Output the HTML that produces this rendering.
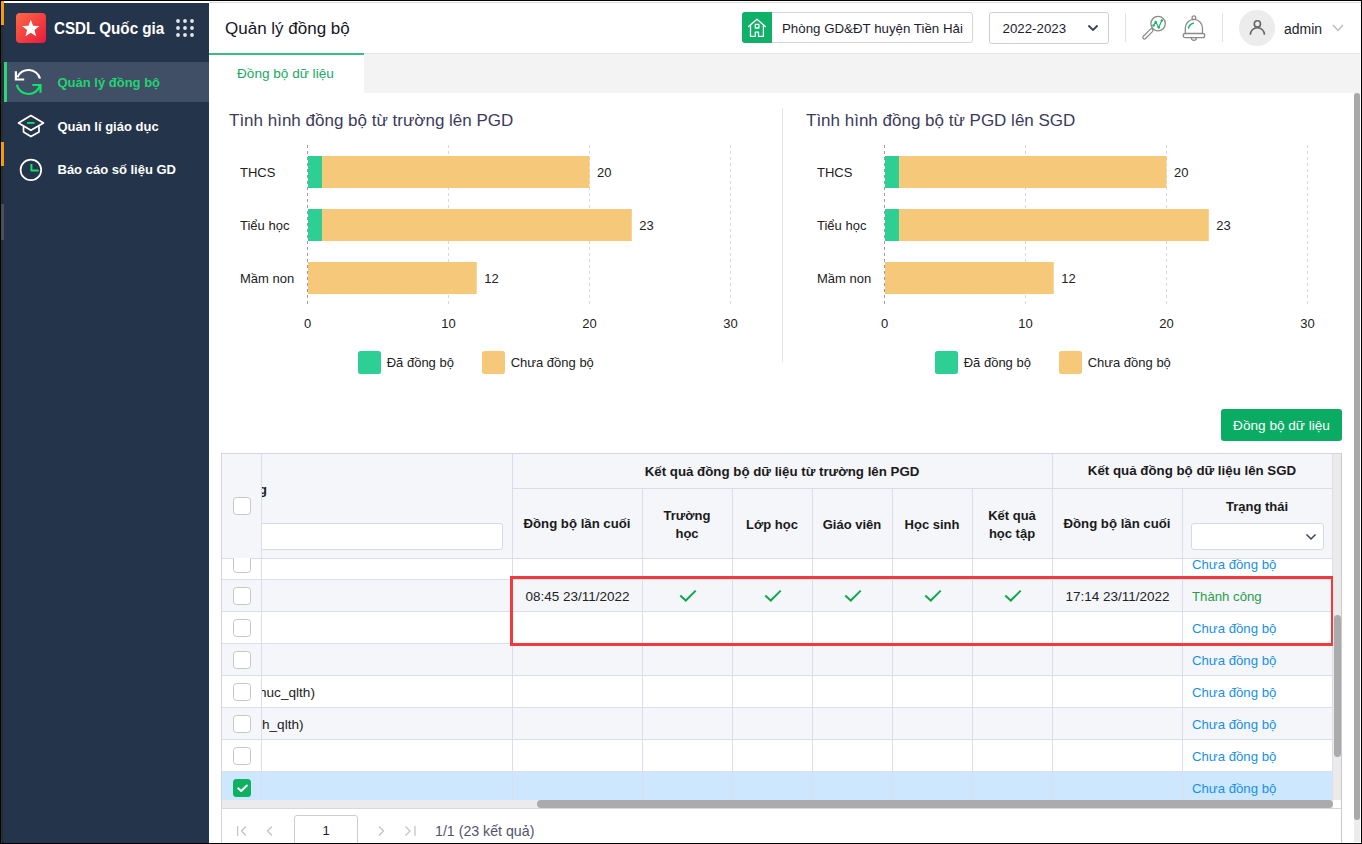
<!DOCTYPE html>
<html><head><meta charset="utf-8">
<style>
*{box-sizing:border-box;margin:0;padding:0}
html,body{width:1362px;height:844px;overflow:hidden;background:#fff}
body{position:relative;font-family:"Liberation Sans",sans-serif;color:#222}
.a{position:absolute}
.t{position:absolute;white-space:nowrap;line-height:1}
/* frame */
#fr-top{left:0;top:0;width:1362px;height:1px;background:#000}
#fr-bot{left:0;top:843px;width:1362px;height:1px;background:#000}
#fr-left{left:0;top:0;width:1px;height:844px;background:#000}
#fr-right{left:1361px;top:0;width:1px;height:844px;background:#000}
/* sidebar */
#side{left:1px;top:1px;width:208px;height:842px;background:#24344b}
#side-edge{left:1px;top:1px;width:3px;height:842px;background:linear-gradient(to right,#2b3134 0,#2b3134 1px,#262c33 1px,#262c33 2px,#22353e 2px)}
#sb-white{left:4px;top:1px;width:1357px;height:1px;background:#fff}
.logo{left:16px;top:13px;width:30px;height:30px;border-radius:4px;background:linear-gradient(135deg,#ff6a45,#e8193c)}
.menu-act{left:4px;top:62px;width:205px;height:40px;background:#404f65}
.menu-bar{left:4px;top:62px;width:3px;height:40px;background:#2ed47a}
.mi{font-weight:bold;font-size:13px;color:#fff}
</style></head>
<body>
<div class="a" id="side"></div>
<div class="a" id="side-edge"></div>
<div class="a" style="left:1px;top:1px;width:3px;height:24px;background:#f0a000"></div>
<div class="a" style="left:1px;top:142px;width:3px;height:24px;background:#f0a000"></div>
<div class="a" style="left:1px;top:204px;width:3px;height:36px;background:#4a4f55"></div>
<div class="a" id="sb-white"></div>
<div class="a" style="left:4px;top:2px;width:205px;height:1px;background:#fff"></div>
<div class="a" style="left:209px;top:2px;width:1152px;height:1px;background:#dddddd"></div>

<div class="a logo">
  <svg width="30" height="30" viewBox="0 0 30 30"><polygon points="14.80,6.80 17.09,12.74 23.45,13.09 18.51,17.11 20.15,23.26 14.80,19.80 9.45,23.26 11.09,17.11 6.15,13.09 12.51,12.74" fill="#fff"/></svg>
</div>
<div class="t" style="left:54px;top:20.9px;font-size:16.6px;color:#fff;font-weight:bold;transform:scaleX(0.915);transform-origin:0 0">CSDL Quốc gia</div>
<svg class="a" style="left:175px;top:18px" width="20" height="20" viewBox="0 0 20 20" fill="#e6e6ea">
 <circle cx="3" cy="3" r="1.9"/><circle cx="10" cy="3" r="1.9"/><circle cx="17" cy="3" r="1.9"/>
 <circle cx="3" cy="10" r="1.9"/><circle cx="10" cy="10" r="1.9"/><circle cx="17" cy="10" r="1.9"/>
 <circle cx="3" cy="17" r="1.9"/><circle cx="10" cy="17" r="1.9"/><circle cx="17" cy="17" r="1.9"/>
</svg>

<div class="a menu-act"></div>
<div class="a menu-bar"></div>

<svg class="a" style="left:0;top:0" width="60" height="200" viewBox="0 0 60 200" fill="none" stroke-width="2.2">
 <path d="M17.45 77.3 A12 12 0 0 1 39.98 78.5" stroke="#fff"/>
 <path d="M15.9 71.3 V79.5 H24.2" stroke="#fff"/>
 <path d="M16.81 84.7 A12 12 0 0 0 40.09 85.1" stroke="#14e06c"/>
 <path d="M32.3 85 H40.5 V92.8" stroke="#14e06c"/>
 <g stroke-width="1.7" stroke-linejoin="round">
 <path d="M30.9 115.5 L43.5 122.9 L30.9 130.3 L18.5 122.9 Z" stroke="#fff"/>
 <path d="M23.5 126.3 V132.1 L30.9 136.6 L39 132.1 V126.3" stroke="#fff"/>
 <path d="M27.1 122.9 H34.5" stroke="#14e06c" stroke-width="1.9"/>
 <circle cx="30.9" cy="169.9" r="10.3" stroke="#fff"/>
 <path d="M31.4 164 V170.4 H38.6" stroke="#14e06c" stroke-width="2"/>
 </g>
</svg>
<div class="t mi" style="left:57.5px;top:76px;color:#22d372">Quản lý đồng bộ</div>
<div class="t mi" style="left:57.5px;top:119.6px">Quản lí giáo dục</div>
<div class="t mi" style="left:57.5px;top:163.3px">Báo cáo số liệu GD</div>


<!-- header -->
<div class="t" style="left:225px;top:19.6px;font-size:17px;color:#161628">Quản lý đồng bộ</div>
<div class="a" style="left:742px;top:12px;width:231px;height:31px;border:1px solid #d6d6d6;border-radius:3px;background:#fff"></div>
<div class="a" style="left:742px;top:12px;width:30px;height:31px;background:#10b068;border-radius:3px 0 0 3px"></div>
<svg class="a" style="left:742px;top:12px" width="30" height="31" viewBox="0 0 30 31" fill="none" stroke="#fff" stroke-width="1.3" stroke-linejoin="round" stroke-linecap="round">
 <path d="M6.6 14.6 L15 7.3 L23.4 14.6"/>
 <path d="M8.5 12.8 V24.4 H13.3 V20.2 H16.5 V24.4 H21.4 V12.8"/>
 <rect x="13.3" y="12.4" width="3.6" height="3.6"/>
</svg>
<div class="t" style="left:782px;top:22px;font-size:13.3px;color:#1d1d2d">Phòng GD&amp;ĐT huyện Tiền Hải</div>
<div class="a" style="left:989px;top:12px;width:120px;height:32px;border:1px solid #cfcfcf;border-radius:3px"></div>
<div class="t" style="left:1002.5px;top:22.3px;font-size:13.3px;color:#1d1d2d">2022-2023</div>
<svg class="a" style="left:1086px;top:23px" width="14" height="10" viewBox="0 0 14 10" fill="none" stroke="#3d3d5a" stroke-width="1.8"><path d="M2.4 2.5 L7 7 L11.6 2.5"/></svg>
<div class="a" style="left:1125px;top:13px;width:1px;height:29px;background:#e2e2e2"></div>
<svg class="a" style="left:1140px;top:13px" width="30" height="30" viewBox="0 0 30 30" fill="none">
 <circle cx="18.1" cy="10.6" r="7.2" stroke="#8a8a8a" stroke-width="1.3"/>
 <rect x="-1.6" y="0" width="3.2" height="13" rx="1.6" transform="translate(12.5,16.3) rotate(45)" stroke="#8a8a8a" stroke-width="1.2"/>
 <path d="M13.5 12.5 L15.7 9 L18.7 14.5 L21.8 7.5" stroke="#17b56c" stroke-width="1.2" stroke-linejoin="round"/>
 <circle cx="13.5" cy="12.5" r="1.25" fill="#17b56c"/><circle cx="15.7" cy="9" r="1.25" fill="#17b56c"/><circle cx="18.7" cy="14.5" r="1.25" fill="#17b56c"/><circle cx="21.8" cy="7.5" r="1.25" fill="#17b56c"/>
</svg>
<svg class="a" style="left:1180px;top:13px" width="28" height="30" viewBox="0 0 28 30" fill="none" stroke="#8a8a8a" stroke-width="1.3">
 <circle cx="13.9" cy="4.7" r="1.9"/>
 <path d="M5.3 20.5 V15 a8.6 8.6 0 0 1 17.2 0 V20.5"/>
 <rect x="3.2" y="20.5" width="21.5" height="4.2" rx="2"/>
 <path d="M11.4 24.8 a2.5 2.5 0 0 0 5 0"/>
 <path d="M8.5 15 a6.5 6.5 0 0 1 4.9 -4.7" stroke="#17b56c" stroke-width="1.4" stroke-linecap="round"/>
</svg>
<div class="a" style="left:1222px;top:13px;width:1px;height:29px;background:#e2e2e2"></div>
<div class="a" style="left:1239px;top:10px;width:35.5px;height:35.5px;border-radius:50%;background:#ececec"></div>
<svg class="a" style="left:1239px;top:10px" width="36" height="36" viewBox="0 0 36 36" fill="none" stroke="#676767" stroke-width="1.6">
 <circle cx="18.4" cy="13.9" r="3.1"/>
 <path d="M11.3 24.8 a7.1 7.1 0 0 1 14.2 0"/>
</svg>
<div class="t" style="left:1284px;top:21.8px;font-size:14px;color:#1d1d2d">admin</div>
<svg class="a" style="left:1331px;top:22px" width="14" height="12" viewBox="0 0 14 12" fill="none" stroke="#bdbdbd" stroke-width="1.5"><path d="M2 3 L7 8.5 L12 3"/></svg>

<!-- tab bar -->
<div class="a" style="left:209px;top:53px;width:1151px;height:40px;background:#f3f3f3;border-top:1px solid #e4e4e4"></div>
<div class="a" style="left:209px;top:53px;width:155px;height:40px;background:#fff;border-top:2px solid #3fb984"></div>
<div class="t" style="left:237px;top:67.4px;font-size:13.6px;color:#1aa862">Đồng bộ dữ liệu</div>

<svg class="a" style="left:0;top:0" width="1362" height="844" font-family="Liberation Sans">
<text x="229" y="125.8" font-size="17" fill="#3b3b5c" font-weight="normal" text-anchor="start" >Tình hình đồng bộ từ trường lên PGD</text>
<line x1="307.5" y1="145" x2="307.5" y2="304" stroke="#9a9a9a" stroke-width="1" stroke-dasharray="3,3"/>
<line x1="448.5" y1="145" x2="448.5" y2="304" stroke="#d9d9d9" stroke-width="1" stroke-dasharray="3,3"/>
<line x1="589.5" y1="145" x2="589.5" y2="304" stroke="#d9d9d9" stroke-width="1" stroke-dasharray="3,3"/>
<line x1="730.5" y1="145" x2="730.5" y2="304" stroke="#d9d9d9" stroke-width="1" stroke-dasharray="3,3"/>
<text x="240" y="177" font-size="13" fill="#222" font-weight="normal" text-anchor="start" >THCS</text>
<rect x="308.0" y="156" width="14.1" height="32" fill="#2ecf95"/>
<rect x="322.1" y="156" width="267.4" height="32" fill="#f6c879"/>
<text x="597.0" y="177" font-size="13" fill="#222" font-weight="normal" text-anchor="start" >20</text>
<text x="240" y="230" font-size="13" fill="#222" font-weight="normal" text-anchor="start" >Tiểu học</text>
<rect x="308.0" y="209" width="14.1" height="32" fill="#2ecf95"/>
<rect x="322.1" y="209" width="309.7" height="32" fill="#f6c879"/>
<text x="639.3" y="230" font-size="13" fill="#222" font-weight="normal" text-anchor="start" >23</text>
<text x="240" y="283" font-size="13" fill="#222" font-weight="normal" text-anchor="start" >Mầm non</text>
<rect x="308.0" y="262" width="168.7" height="32" fill="#f6c879"/>
<text x="484.2" y="283" font-size="13" fill="#222" font-weight="normal" text-anchor="start" >12</text>
<text x="307.5" y="328" font-size="13" fill="#222" font-weight="normal" text-anchor="middle" >0</text>
<text x="448.5" y="328" font-size="13" fill="#222" font-weight="normal" text-anchor="middle" >10</text>
<text x="589.5" y="328" font-size="13" fill="#222" font-weight="normal" text-anchor="middle" >20</text>
<text x="730.5" y="328" font-size="13" fill="#222" font-weight="normal" text-anchor="middle" >30</text>
<rect x="358" y="351" width="23" height="23" rx="2.5" fill="#2ecf95"/>
<text x="386.7" y="366.6" font-size="13" fill="#222" font-weight="normal" text-anchor="start" >Đã đồng bộ</text>
<rect x="482" y="351" width="23" height="23" rx="2.5" fill="#f6c879"/>
<text x="510.7" y="366.6" font-size="13" fill="#222" font-weight="normal" text-anchor="start" >Chưa đồng bộ</text>
<line x1="782.5" y1="108" x2="782.5" y2="362" stroke="#e6e6e6" stroke-width="1"/>
<text x="806" y="125.8" font-size="17" fill="#3b3b5c" font-weight="normal" text-anchor="start" >Tình hình đồng bộ từ PGD lên SGD</text>
<line x1="884.5" y1="145" x2="884.5" y2="304" stroke="#9a9a9a" stroke-width="1" stroke-dasharray="3,3"/>
<line x1="1025.5" y1="145" x2="1025.5" y2="304" stroke="#d9d9d9" stroke-width="1" stroke-dasharray="3,3"/>
<line x1="1166.5" y1="145" x2="1166.5" y2="304" stroke="#d9d9d9" stroke-width="1" stroke-dasharray="3,3"/>
<line x1="1307.5" y1="145" x2="1307.5" y2="304" stroke="#d9d9d9" stroke-width="1" stroke-dasharray="3,3"/>
<text x="817" y="177" font-size="13" fill="#222" font-weight="normal" text-anchor="start" >THCS</text>
<rect x="885.0" y="156" width="14.1" height="32" fill="#2ecf95"/>
<rect x="899.1" y="156" width="267.4" height="32" fill="#f6c879"/>
<text x="1174.0" y="177" font-size="13" fill="#222" font-weight="normal" text-anchor="start" >20</text>
<text x="817" y="230" font-size="13" fill="#222" font-weight="normal" text-anchor="start" >Tiểu học</text>
<rect x="885.0" y="209" width="14.1" height="32" fill="#2ecf95"/>
<rect x="899.1" y="209" width="309.7" height="32" fill="#f6c879"/>
<text x="1216.3" y="230" font-size="13" fill="#222" font-weight="normal" text-anchor="start" >23</text>
<text x="817" y="283" font-size="13" fill="#222" font-weight="normal" text-anchor="start" >Mầm non</text>
<rect x="885.0" y="262" width="168.7" height="32" fill="#f6c879"/>
<text x="1061.2" y="283" font-size="13" fill="#222" font-weight="normal" text-anchor="start" >12</text>
<text x="884.5" y="328" font-size="13" fill="#222" font-weight="normal" text-anchor="middle" >0</text>
<text x="1025.5" y="328" font-size="13" fill="#222" font-weight="normal" text-anchor="middle" >10</text>
<text x="1166.5" y="328" font-size="13" fill="#222" font-weight="normal" text-anchor="middle" >20</text>
<text x="1307.5" y="328" font-size="13" fill="#222" font-weight="normal" text-anchor="middle" >30</text>
<rect x="935" y="351" width="23" height="23" rx="2.5" fill="#2ecf95"/>
<text x="963.7" y="366.6" font-size="13" fill="#222" font-weight="normal" text-anchor="start" >Đã đồng bộ</text>
<rect x="1059" y="351" width="23" height="23" rx="2.5" fill="#f6c879"/>
<text x="1087.7" y="366.6" font-size="13" fill="#222" font-weight="normal" text-anchor="start" >Chưa đồng bộ</text>
</svg>
<div class="a" style="left:221px;top:453px;width:1120px;height:105px;background:#f4f6fa"></div>
<div class="a" style="left:221px;top:558px;width:1112px;height:242px;overflow:hidden">
<div class="a" style="left:0;top:-10px;width:1112px;height:32px;background:#fff;border-bottom:1px solid #dcdcec"></div>
<div class="a" style="left:0;top:22px;width:1112px;height:32px;background:#f4f6fa;border-bottom:1px solid #dcdcec"></div>
<div class="a" style="left:0;top:54px;width:1112px;height:32px;background:#fff;border-bottom:1px solid #dcdcec"></div>
<div class="a" style="left:0;top:86px;width:1112px;height:32px;background:#f4f6fa;border-bottom:1px solid #dcdcec"></div>
<div class="a" style="left:0;top:118px;width:1112px;height:32px;background:#fff;border-bottom:1px solid #dcdcec"></div>
<div class="a" style="left:0;top:150px;width:1112px;height:32px;background:#f4f6fa;border-bottom:1px solid #dcdcec"></div>
<div class="a" style="left:0;top:182px;width:1112px;height:32px;background:#fff;border-bottom:1px solid #dcdcec"></div>
<div class="a" style="left:0;top:214px;width:1112px;height:32px;background:#cce7fe;border-bottom:1px solid #dcdcec"></div>
<div class="a" style="left:40px;top:0;width:1px;height:242px;background:#dcdcec"></div>
<div class="a" style="left:291px;top:0;width:1px;height:242px;background:#dcdcec"></div>
<div class="a" style="left:421px;top:0;width:1px;height:242px;background:#dcdcec"></div>
<div class="a" style="left:511px;top:0;width:1px;height:242px;background:#dcdcec"></div>
<div class="a" style="left:591px;top:0;width:1px;height:242px;background:#dcdcec"></div>
<div class="a" style="left:671px;top:0;width:1px;height:242px;background:#dcdcec"></div>
<div class="a" style="left:751px;top:0;width:1px;height:242px;background:#dcdcec"></div>
<div class="a" style="left:831px;top:0;width:1px;height:242px;background:#dcdcec"></div>
<div class="a" style="left:961px;top:0;width:1px;height:242px;background:#dcdcec"></div>
<div class="a" style="left:1111px;top:0;width:1px;height:242px;background:#dcdcec"></div>
</div>
<div class="a" style="left:221px;top:453px;width:1120px;height:1px;background:#d3d4e0"></div>
<div class="a" style="left:221px;top:453px;width:1px;height:390px;background:#d3d4e0"></div>
<div class="a" style="left:512px;top:488px;width:820px;height:1px;background:#dcdcec"></div>
<div class="a" style="left:221px;top:558px;width:1112px;height:1px;background:#dcdcec"></div>
<div class="a" style="left:261px;top:454px;width:1px;height:104px;background:#dcdcec"></div>
<div class="a" style="left:512px;top:454px;width:1px;height:104px;background:#dcdcec"></div>
<div class="a" style="left:1052px;top:454px;width:1px;height:104px;background:#dcdcec"></div>
<div class="a" style="left:1332px;top:454px;width:1px;height:104px;background:#dcdcec"></div>
<div class="a" style="left:642px;top:488px;width:1px;height:70px;background:#dcdcec"></div>
<div class="a" style="left:732px;top:488px;width:1px;height:70px;background:#dcdcec"></div>
<div class="a" style="left:812px;top:488px;width:1px;height:70px;background:#dcdcec"></div>
<div class="a" style="left:892px;top:488px;width:1px;height:70px;background:#dcdcec"></div>
<div class="a" style="left:972px;top:488px;width:1px;height:70px;background:#dcdcec"></div>
<div class="a" style="left:1182px;top:488px;width:1px;height:70px;background:#dcdcec"></div>
<div class="a" style="left:262px;top:454px;width:250px;height:104px;overflow:hidden">
<div class="t" style="left:-42px;top:28.6px;font-size:13px;font-weight:bold;color:#1a1a1a">Trường</div>
<div class="a" style="left:-10px;top:69px;width:251px;height:27px;border:1px solid #d8d9e6;border-radius:3px;background:#fff"></div>
</div>
<div class="t" style="left:632px;width:300px;text-align:center;top:464.5px;font-size:13.3px;font-weight:bold;color:#1a1a1a">Kết quả đồng bộ dữ liệu từ trường lên PGD</div>
<div class="t" style="left:1042px;width:300px;text-align:center;top:464.3px;font-size:13.3px;font-weight:bold;color:#1a1a1a">Kết quả đồng bộ dữ liệu lên SGD</div>
<div class="t" style="left:427px;width:300px;text-align:center;top:517.3px;font-size:13.2px;font-weight:bold;color:#1a1a1a">Đồng bộ lần cuối</div>
<div class="t" style="left:537px;width:300px;text-align:center;top:509.2px;font-size:13px;font-weight:bold;color:#1a1a1a">Trường</div>
<div class="t" style="left:537px;width:300px;text-align:center;top:527.3px;font-size:13px;font-weight:bold;color:#1a1a1a">học</div>
<div class="t" style="left:622px;width:300px;text-align:center;top:517.5px;font-size:13px;font-weight:bold;color:#1a1a1a">Lớp học</div>
<div class="t" style="left:702px;width:300px;text-align:center;top:517.5px;font-size:13px;font-weight:bold;color:#1a1a1a">Giáo viên</div>
<div class="t" style="left:782px;width:300px;text-align:center;top:517.5px;font-size:13px;font-weight:bold;color:#1a1a1a">Học sinh</div>
<div class="t" style="left:862px;width:300px;text-align:center;top:509.2px;font-size:13px;font-weight:bold;color:#1a1a1a">Kết quả</div>
<div class="t" style="left:862px;width:300px;text-align:center;top:527.3px;font-size:13px;font-weight:bold;color:#1a1a1a">học tập</div>
<div class="t" style="left:967px;width:300px;text-align:center;top:517.3px;font-size:13.2px;font-weight:bold;color:#1a1a1a">Đồng bộ lần cuối</div>
<div class="t" style="left:1107px;width:300px;text-align:center;top:500.0px;font-size:13px;font-weight:bold;color:#1a1a1a">Trạng thái</div>
<div class="a" style="left:1191px;top:523px;width:133px;height:27px;border:1px solid #d8d9e6;border-radius:3px;background:#fff"></div>
<svg class="a" style="left:1304px;top:531px" width="14" height="12" viewBox="0 0 14 12" fill="none" stroke="#3d3d5a" stroke-width="1.5"><path d="M2.5 3.5 L7 8 L11.5 3.5"/></svg>
<div class="a" style="left:233px;top:497px;width:18px;height:18px;border:1px solid #c6c6c6;border-radius:3.5px;background:#fff"></div>
<div class="a" style="left:221px;top:558px;width:1112px;height:242px;overflow:hidden">
<div class="a" style="left:12px;top:-3px;width:18px;height:18px;border:1px solid #c6c6c6;border-radius:3.5px;background:#fff"></div>
<div class="t" style="left:971px;top:-0.4px;font-size:13.2px;color:#1890ee">Chưa đồng bộ</div>
<div class="a" style="left:12px;top:29px;width:18px;height:18px;border:1px solid #c6c6c6;border-radius:3.5px;background:#fff"></div>
<div class="t" style="left:971px;top:31.6px;font-size:13.2px;color:#2a9d4a">Thành công</div>
<div class="a" style="left:12px;top:61px;width:18px;height:18px;border:1px solid #c6c6c6;border-radius:3.5px;background:#fff"></div>
<div class="t" style="left:971px;top:63.6px;font-size:13.2px;color:#1890ee">Chưa đồng bộ</div>
<div class="a" style="left:12px;top:93px;width:18px;height:18px;border:1px solid #c6c6c6;border-radius:3.5px;background:#fff"></div>
<div class="t" style="left:971px;top:95.6px;font-size:13.2px;color:#1890ee">Chưa đồng bộ</div>
<div class="a" style="left:12px;top:125px;width:18px;height:18px;border:1px solid #c6c6c6;border-radius:3.5px;background:#fff"></div>
<div class="t" style="left:971px;top:127.6px;font-size:13.2px;color:#1890ee">Chưa đồng bộ</div>
<div class="a" style="left:12px;top:157px;width:18px;height:18px;border:1px solid #c6c6c6;border-radius:3.5px;background:#fff"></div>
<div class="t" style="left:971px;top:159.6px;font-size:13.2px;color:#1890ee">Chưa đồng bộ</div>
<div class="a" style="left:12px;top:189px;width:18px;height:18px;border:1px solid #c6c6c6;border-radius:3.5px;background:#fff"></div>
<div class="t" style="left:971px;top:191.6px;font-size:13.2px;color:#1890ee">Chưa đồng bộ</div>
<div class="a" style="left:12px;top:221px;width:18px;height:18px;border-radius:3.5px;background:#10b062"></div>
<svg class="a" style="left:12px;top:221px" width="18" height="18" viewBox="0 0 18 18" fill="none" stroke="#fff" stroke-width="2" stroke-linecap="round" stroke-linejoin="round"><path d="M5.2 9.3 L8.2 12 L13.9 6.6"/></svg>
<div class="t" style="left:971px;top:223.6px;font-size:13.2px;color:#1890ee">Chưa đồng bộ</div>
<div class="t" style="left:304.5px;top:32.2px;font-size:13.5px;color:#222">08:45 23/11/2022</div>
<div class="t" style="left:844.5px;top:32.2px;font-size:13.5px;color:#222">17:14 23/11/2022</div>
<svg class="a" style="left:458px;top:29px" width="18" height="16" viewBox="0 0 18 16" fill="none" stroke="#13a54f" stroke-width="2"><path d="M1.3 8.5 L6.8 13.5 L16.7 3.6"/></svg>
<svg class="a" style="left:543px;top:29px" width="18" height="16" viewBox="0 0 18 16" fill="none" stroke="#13a54f" stroke-width="2"><path d="M1.3 8.5 L6.8 13.5 L16.7 3.6"/></svg>
<svg class="a" style="left:623px;top:29px" width="18" height="16" viewBox="0 0 18 16" fill="none" stroke="#13a54f" stroke-width="2"><path d="M1.3 8.5 L6.8 13.5 L16.7 3.6"/></svg>
<svg class="a" style="left:703px;top:29px" width="18" height="16" viewBox="0 0 18 16" fill="none" stroke="#13a54f" stroke-width="2"><path d="M1.3 8.5 L6.8 13.5 L16.7 3.6"/></svg>
<svg class="a" style="left:783px;top:29px" width="18" height="16" viewBox="0 0 18 16" fill="none" stroke="#13a54f" stroke-width="2"><path d="M1.3 8.5 L6.8 13.5 L16.7 3.6"/></svg>
<div class="a" style="left:41px;top:0;width:251px;height:242px;overflow:hidden">
<div class="t" style="left:-3px;top:127.8px;font-size:13.6px;color:#222">huc_qlth)</div>
<div class="t" style="left:0px;top:159.8px;font-size:13.6px;color:#222">h_qlth)</div>
</div>
</div>
<div class="a" style="left:510px;top:576px;width:824px;height:70px;border:3px solid #f03a3e"></div>
<div class="a" style="left:1333px;top:454px;width:8px;height:346px;background:#ebebeb"></div>
<div class="a" style="left:1334px;top:615px;width:7px;height:142px;background:#ababab;border-radius:3.5px"></div>
<div class="a" style="left:222px;top:800px;width:1111px;height:8px;background:#ebebeb"></div>
<div class="a" style="left:537px;top:800px;width:796px;height:8px;background:#ababab;border-radius:4px"></div>
<div class="a" style="left:222px;top:808px;width:1119px;height:1px;background:#d6d6ea"></div>
<div class="a" style="left:1341px;top:453px;width:1px;height:390px;background:#c9c9c9"></div>
<svg class="a" style="left:230px;top:820px" width="200" height="22" viewBox="0 0 200 22" fill="none" stroke="#c4c4c4" stroke-width="1.3"><path d="M7.6 6 V16"/><path d="M16 6.5 L11.5 11 L16 15.5"/><path d="M42 6.5 L37.5 11 L42 15.5"/><path d="M149 6.5 L153.5 11 L149 15.5"/><path d="M175.5 6.5 L180 11 L175.5 15.5"/><path d="M185 6 V16"/></svg>
<div class="a" style="left:294px;top:815px;width:64px;height:40px;border:1px solid #cdcdcd;border-radius:3px;background:#fff"></div>
<div class="t" style="left:294px;width:64px;text-align:center;top:824px;font-size:13px;color:#222">1</div>
<div class="t" style="left:435px;top:823.7px;font-size:14.2px;color:#50546a">1/1 (23 kết quả)</div>
<div class="a" style="left:1221px;top:409px;width:121px;height:32px;border-radius:3px;background:#0aab62"></div>
<div class="t" style="left:1221px;width:121px;text-align:center;top:418.5px;font-size:13.6px;color:#fff">Đồng bộ dữ liệu</div>
<div class="a" style="left:1354px;top:93px;width:6px;height:749px;background:#ececec"></div>
<div class="a" style="left:1354px;top:93px;width:6px;height:727px;background:#a9a9a9;border-radius:3px"></div>
<!-- frame -->
<div class="a" id="fr-top"></div>
<div class="a" id="fr-bot"></div>
<div class="a" id="fr-left"></div>
<div class="a" id="fr-right"></div>
</body></html>
